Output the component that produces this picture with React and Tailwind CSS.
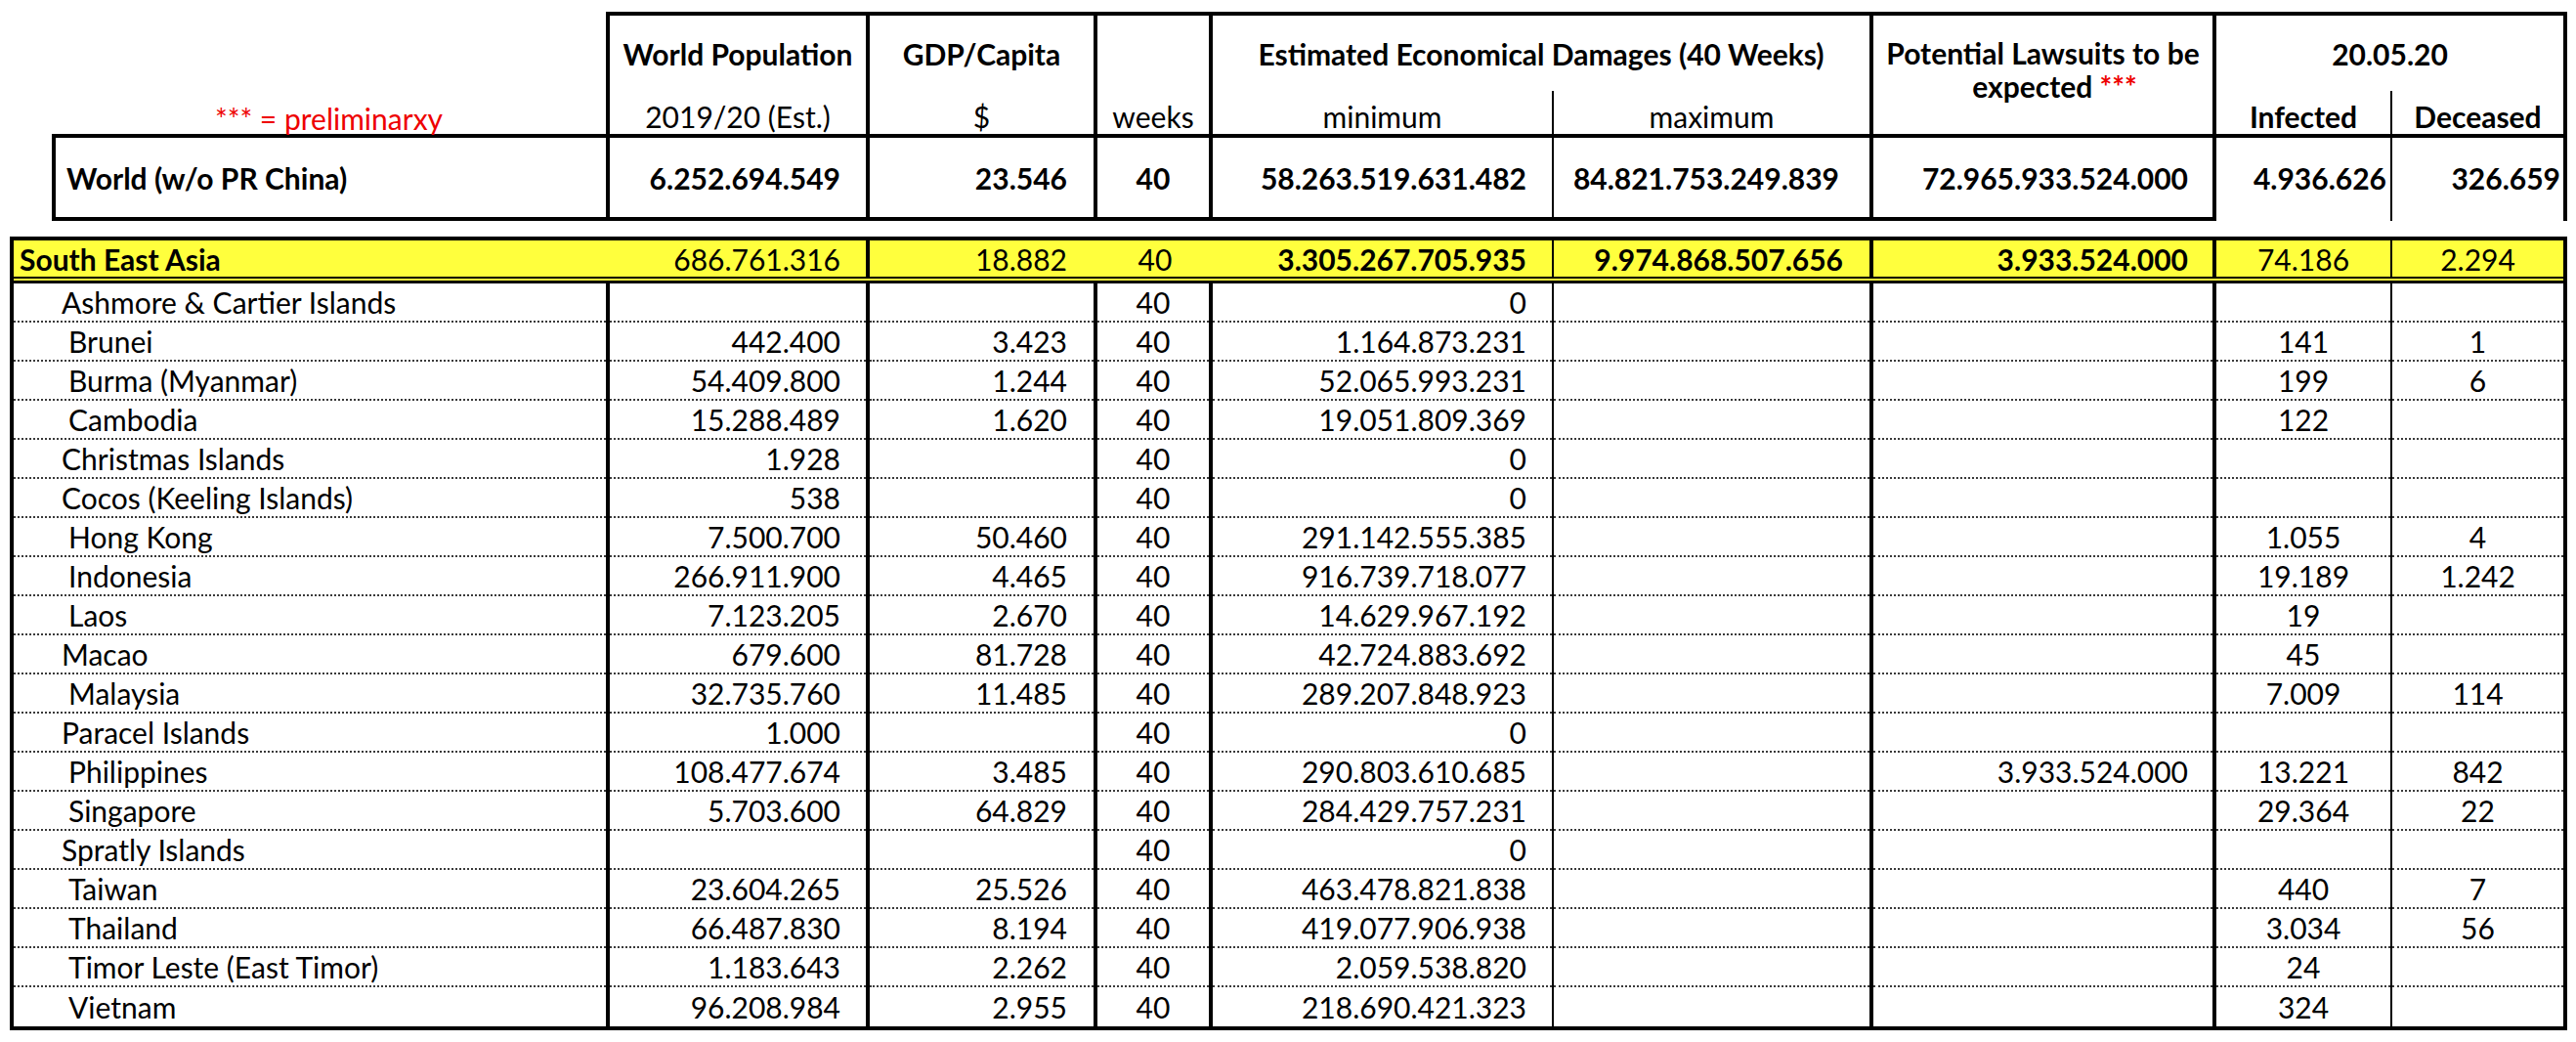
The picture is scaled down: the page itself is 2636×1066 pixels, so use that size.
import React from "react";

const rows = [
  ["Ashmore & Cartier Islands", false, "", "", "0", "", "", ""],
  ["Brunei", true, "442.400", "3.423", "1.164.873.231", "", "141", "1"],
  ["Burma (Myanmar)", true, "54.409.800", "1.244", "52.065.993.231", "", "199", "6"],
  ["Cambodia", true, "15.288.489", "1.620", "19.051.809.369", "", "122", ""],
  ["Christmas Islands", false, "1.928", "", "0", "", "", ""],
  ["Cocos (Keeling Islands)", false, "538", "", "0", "", "", ""],
  ["Hong Kong", true, "7.500.700", "50.460", "291.142.555.385", "", "1.055", "4"],
  ["Indonesia", true, "266.911.900", "4.465", "916.739.718.077", "", "19.189", "1.242"],
  ["Laos", true, "7.123.205", "2.670", "14.629.967.192", "", "19", ""],
  ["Macao", false, "679.600", "81.728", "42.724.883.692", "", "45", ""],
  ["Malaysia", true, "32.735.760", "11.485", "289.207.848.923", "", "7.009", "114"],
  ["Paracel Islands", false, "1.000", "", "0", "", "", ""],
  ["Philippines", true, "108.477.674", "3.485", "290.803.610.685", "3.933.524.000", "13.221", "842"],
  ["Singapore", true, "5.703.600", "64.829", "284.429.757.231", "", "29.364", "22"],
  ["Spratly Islands", false, "", "", "0", "", "", ""],
  ["Taiwan", true, "23.604.265", "25.526", "463.478.821.838", "", "440", "7"],
  ["Thailand", true, "66.487.830", "8.194", "419.077.906.938", "", "3.034", "56"],
  ["Timor Leste (East Timor)", true, "1.183.643", "2.262", "2.059.538.820", "", "24", ""],
  ["Vietnam", true, "96.208.984", "2.955", "218.690.421.323", "", "324", ""],
];

function DataRow({ r, last }) {
  const [name, indent, pop, gdp, min, law, inf, dec] = r;
  const dot = last ? "" : "border-b-2 border-dotted border-[#3a3a3a]";
  return (
    <div className="flex h-[40px]">
      <div className="w-[610px] h-full border-r-4 border-black">
        <div className={`h-full flex items-center whitespace-pre ${indent ? "pl-[56px]" : "pl-[49px]"} ${dot}`}>{name}</div>
      </div>
      <div className="w-[266px] h-full border-r-4 border-black">
        <div className={`h-full flex items-center justify-end pr-[26px] ${dot}`}>{pop}</div>
      </div>
      <div className="w-[233px] h-full border-r-4 border-black">
        <div className={`h-full flex items-center justify-end pr-[27px] ${dot}`}>{gdp}</div>
      </div>
      <div className="w-[118px] h-full border-r-4 border-black">
        <div className={`h-full flex items-center justify-center ${dot}`}>40</div>
      </div>
      <div className="w-[349px] h-full border-r-2 border-black">
        <div className={`h-full flex items-center justify-end pr-[26px] ${dot}`}>{min}</div>
      </div>
      <div className="w-[327px] h-full border-r-4 border-black">
        <div className={`h-full ${dot}`}></div>
      </div>
      <div className="w-[351px] h-full border-r-4 border-black">
        <div className={`h-full flex items-center justify-end pr-[25px] ${dot}`}>{law}</div>
      </div>
      <div className="w-[180px] h-full border-r-2 border-black">
        <div className={`h-full flex items-center justify-center ${dot}`}>{inf}</div>
      </div>
      <div className="w-[175px] h-full">
        <div className={`h-full flex items-center justify-center ${dot}`}>{dec}</div>
      </div>
    </div>
  );
}

export default function App() {
  return (
    <div className="w-[2636px] h-[1066px] bg-white text-black pt-[12px] font-['Lato','Liberation_Sans',sans-serif] text-[30px] leading-[34px] overflow-hidden">
      {/* header */}
      <div className="flex">
        <div className="w-[620px] h-[125px] pl-[53px] pt-[92px] text-center text-[#ee0000] whitespace-nowrap">
          *** = preliminarxy
        </div>
        <div className="w-[2007px] h-[125px] border-t-4 border-l-4 border-r-4 border-black flex">
          <div className="w-[266px] border-r-4 border-black flex flex-col">
            <div className="h-[77px] flex items-center justify-center font-bold whitespace-nowrap">World Population</div>
            <div className="h-[44px] pt-[9px] text-center whitespace-nowrap">2019/20 (Est.)</div>
          </div>
          <div className="w-[233px] border-r-4 border-black flex flex-col">
            <div className="h-[77px] flex items-center justify-center font-bold">GDP/Capita</div>
            <div className="h-[44px] pt-[9px] text-center">$</div>
          </div>
          <div className="w-[118px] border-r-4 border-black flex flex-col">
            <div className="h-[77px]"></div>
            <div className="h-[44px] pt-[9px] text-center">weeks</div>
          </div>
          <div className="w-[676px] border-r-4 border-black flex flex-col">
            <div className="h-[77px] flex items-center justify-center font-bold whitespace-nowrap">
              Estimated Economical Damages (40 Weeks)
            </div>
            <div className="h-[44px] flex">
              <div className="w-[349px] border-r-2 border-black pt-[9px] text-center">minimum</div>
              <div className="flex-1 pt-[9px] text-center">maximum</div>
            </div>
          </div>
          <div className="w-[351px] border-r-4 border-black pt-[21px] text-center font-bold whitespace-nowrap">
            Potential Lawsuits to be
            <br />
            <span className="pl-[24px]">
              expected <span className="text-[#ee0000]">***</span>
            </span>
          </div>
          <div className="w-[355px] flex flex-col">
            <div className="h-[77px] flex items-center justify-center font-bold">20.05.20</div>
            <div className="h-[44px] flex font-bold">
              <div className="w-[180px] border-r-2 border-black pt-[9px] text-center">Infected</div>
              <div className="flex-1 pt-[9px] text-center">Deceased</div>
            </div>
          </div>
        </div>
      </div>

      {/* world row */}
      <div className="ml-[53px] w-[2574px] h-[89px] border-t-4 border-l-4 border-r-4 border-black flex font-bold">
        <div className="w-[567px] border-r-4 border-b-4 border-black flex items-center pl-[11px] whitespace-nowrap">
          World (w/o PR China)
        </div>
        <div className="w-[266px] border-r-4 border-b-4 border-black flex items-center justify-end pr-[26px]">6.252.694.549</div>
        <div className="w-[233px] border-r-4 border-b-4 border-black flex items-center justify-end pr-[27px]">23.546</div>
        <div className="w-[118px] border-r-4 border-b-4 border-black flex items-center justify-center">40</div>
        <div className="w-[349px] border-r-2 border-b-4 border-black flex items-center justify-end pr-[26px]">58.263.519.631.482</div>
        <div className="w-[327px] border-r-4 border-b-4 border-black flex items-center justify-end pr-[31px]">84.821.753.249.839</div>
        <div className="w-[351px] border-r-4 border-b-4 border-black flex items-center justify-end pr-[25px]">72.965.933.524.000</div>
        <div className="w-[180px] border-r-2 border-black flex items-center justify-end pr-[4px] pb-[4px]">4.936.626</div>
        <div className="w-[175px] flex items-center justify-end pr-[3px] pb-[4px]">326.659</div>
      </div>

      {/* South East Asia table */}
      <div className="mt-[16px] ml-[10px] w-[2617px] border-4 border-black">
        <div className="flex h-[37px] bg-[#ffff3d]">
          <div className="w-[876px] border-r-4 border-black flex items-center justify-between pl-[6px] pr-[26px]">
            <span className="font-bold">South East Asia</span>
            <span>686.761.316</span>
          </div>
          <div className="w-[700px] border-r-2 border-black flex items-center">
            <div className="w-[233px] text-right pr-[31px]">18.882</div>
            <div className="w-[118px] text-center">40</div>
            <div className="w-[347px] text-right pr-[26px] font-bold">3.305.267.705.935</div>
          </div>
          <div className="w-[327px] border-r-4 border-black flex items-center justify-end pr-[27px] font-bold">9.974.868.507.656</div>
          <div className="w-[351px] border-r-4 border-black flex items-center justify-end pr-[25px] font-bold">3.933.524.000</div>
          <div className="w-[180px] border-r-2 border-black flex items-center justify-center">74.186</div>
          <div className="w-[175px] flex items-center justify-center">2.294</div>
        </div>
        <div className="h-[2px] bg-black"></div>
        <div className="h-[2px] bg-[#ffff3d]"></div>
        <div className="h-[3px] bg-black"></div>
        {rows.map((r, i) => (
          <DataRow key={i} r={r} last={i === rows.length - 1} />
        ))}
      </div>
    </div>
  );
}
